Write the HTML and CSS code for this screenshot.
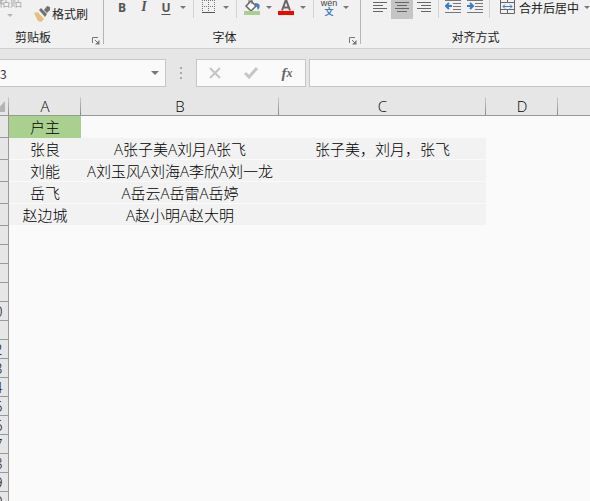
FILE: index.html
```html
<!DOCTYPE html>
<html lang="zh-CN">
<head>
  <meta charset="UTF-8">
  <title>户主</title>
  <link rel="stylesheet" href="styles.css">
</head>
<body>

  <div class="ribbon">
    <section class="group clipboard">
      <div class="tools">
        <button class="paste">粘贴<i class="caret"></i></button>
        <button class="painter">
          <svg width="16" height="16" viewBox="0 0 16 16"><path d="M0 7l4-1 6 7-3 3-3-1z" fill="#e8bf7c"/><path d="M5 4l2-2 6 6-2 3z" fill="#737373"/><path d="M10 4l3-4 3 1v3l-3 3z" fill="#737373"/><path d="M4 6l6 6" stroke="#f1f1f1"/></svg>
          格式刷
        </button>
      </div>
      <div class="group-name">剪贴板</div>
      <button class="launcher" aria-label="剪贴板"><svg width="8" height="8"><path d="M.5 6V.5H6M3 3l3 3" fill="none" stroke="#777"/><path d="M7.500 3v4.500H3z" fill="#777"/></svg></button>
    </section>

    <section class="group font">
      <div class="tools">
        <button class="tool letter"><b>B</b></button>
        <button class="tool letter"><em>I</em></button>
        <button class="tool letter"><u>U</u></button>
        <button class="drop" aria-label="U"><i class="caret"></i></button>
        <span class="sep"></span>
        <button class="tool" aria-label="田"><svg width="14" height="15"><path d="M.5 0v12M6.500 0v12M12.500 0v12M0 .5h13M0 6.500h13" stroke="#777" stroke-dasharray="1 1"/><path d="M0 12.500h13" stroke="#555"/></svg></button>
        <button class="drop" aria-label="田"><i class="caret"></i></button>
        <span class="sep"></span>
        <button class="tool" aria-label="填充"><svg width="16" height="15"><path d="M2 6l5-5 5 5-5 5z" fill="#fafafa" stroke="#666" stroke-width="1.500"/><path d="M5 3V0M8 0v4" fill="none" stroke="#666"/><path d="M11 3c5 0 6 3 3 7-1-1 0-3-3-5z" fill="#4a7fb8"/><path d="M0 11h16v4H0z" fill="#a9d08e"/></svg></button>
        <button class="drop" aria-label="填充"><i class="caret"></i></button>
        <button class="tool" aria-label="A"><svg width="16" height="15"><path d="M4 10.500L7.500 1h1L12 10.500M5 7.500h6" fill="none" stroke="#666" stroke-width="2"/><path d="M0 11h16v4H0z" fill="#f00"/></svg></button>
        <button class="drop" aria-label="A"><i class="caret"></i></button>
        <span class="sep"></span>
        <button class="tool pinyin"><span>wèn</span><span class="wen">文</span></button>
        <button class="drop" aria-label="文"><i class="caret"></i></button>
      </div>
      <div class="group-name">字体</div>
      <button class="launcher" aria-label="字体"><svg width="8" height="8"><path d="M.5 6V.5H6M3 3l3 3" fill="none" stroke="#777"/><path d="M7.500 3v4.500H3z" fill="#777"/></svg></button>
    </section>

    <section class="group align">
      <div class="tools">
        <button class="tool" aria-label="左"><svg width="14" height="15"><path d="M0 2.500h14M0 5.500h10M0 8.500h14M0 11.500h10" stroke="#666"/></svg></button>
        <button class="tool active" aria-label="中"><svg width="14" height="15"><path d="M0 2.500h14M2 5.500h10M0 8.500h14M2 11.500h10" stroke="#666"/></svg></button>
        <button class="tool" aria-label="右"><svg width="14" height="15"><path d="M0 2.500h14M4 5.500h10M0 8.500h14M4 11.500h10" stroke="#666"/></svg></button>
        <span class="sep"></span>
        <button class="tool" aria-label="减少"><svg width="16" height="15"><path d="M0 .5h16M8 3.500h8M8 6.500h8M8 9.500h8M0 12.500h16" stroke="#777"/><path d="M1 6h6M4 3L1 6l3 3" fill="none" stroke="#3f7dbd" stroke-width="2"/></svg></button>
        <button class="tool" aria-label="增加"><svg width="16" height="15"><path d="M0 .5h16M8 3.500h8M8 6.500h8M8 9.500h8M0 12.500h16" stroke="#777"/><path d="M0 6h6M3 3l3 3-3 3" fill="none" stroke="#3f7dbd" stroke-width="2"/></svg></button>
        <span class="sep"></span>
        <button class="merge">
          <svg width="15" height="14"><path d="M.5 0v13.500h14V0M7.500 0v3M7.500 10v3M0 2.500h15M0 9.500h15" fill="none" stroke="#666"/><path d="M3 6.500h9M5 4.500l-2 2 2 2M10 4.500l2 2-2 2" fill="none" stroke="#3f7dbd"/></svg>
          合并后居中
        </button>
        <button class="drop" aria-label="合并后居中"><i class="caret"></i></button>
      </div>
      <div class="group-name">对齐方式</div>
    </section>
  </div>

  <div class="formula-bar">
    <div class="name-box">
      <input type="text" value="3" aria-label="名称框">
      <button class="drop" aria-label="名称"><i class="caret"></i></button>
    </div>
    <svg class="grip" width="2" height="12"><path d="M0 0h2v2H0zM0 5h2v2H0zM0 10h2v2H0z" fill="#aaa"/></svg>
    <div class="formula-buttons">
      <button aria-label="取消"><svg width="12" height="12"><path d="M1 1l10 10M11 1L1 11" stroke="#c4c4c4" stroke-width="2"/></svg></button>
      <button aria-label="输入"><svg width="14" height="12"><path d="M1 6l4 4 8-9" fill="none" stroke="#c6c6c6" stroke-width="3"/></svg></button>
      <button class="fx">f<small>x</small></button>
    </div>
    <input class="formula" type="text" aria-label="编辑栏">
  </div>

  <div class="sheet">
    <table class="grid">
      <colgroup>
        <col class="col-num"><col class="col-a"><col class="col-b"><col class="col-c"><col class="col-d"><col>
      </colgroup>
      <thead>
        <tr>
          <th class="corner"><svg width="10" height="11"><path d="M10 0v11H0z" fill="#b4b4b4"/></svg></th>
          <th>A</th><th>B</th><th>C</th><th>D</th><th></th>
        </tr>
      </thead>
      <tbody>
        <tr class="data"><th>1</th><td class="title">户主</td><td></td><td></td><td></td><td></td></tr>
        <tr class="data band"><th>2</th><td>张良</td><td>A张子美A刘月A张飞</td><td>张子美，刘月，张飞</td><td></td><td></td></tr>
        <tr class="data band"><th>3</th><td>刘能</td><td>A刘玉风A刘海A李欣A刘一龙</td><td></td><td></td><td></td></tr>
        <tr class="data band"><th>4</th><td>岳飞</td><td>A岳云A岳雷A岳婷</td><td></td><td></td><td></td></tr>
        <tr class="data band"><th>5</th><td>赵边城</td><td>A赵小明A赵大明</td><td></td><td></td><td></td></tr>
        <tr><th>6</th><td colspan="5"></td></tr>
        <tr><th>7</th><td colspan="5"></td></tr>
        <tr><th>8</th><td colspan="5"></td></tr>
        <tr><th>9</th><td colspan="5"></td></tr>
        <tr><th>10</th><td colspan="5"></td></tr>
        <tr><th>11</th><td colspan="5"></td></tr>
        <tr><th>12</th><td colspan="5"></td></tr>
        <tr><th>13</th><td colspan="5"></td></tr>
        <tr><th>14</th><td colspan="5"></td></tr>
        <tr><th>15</th><td colspan="5"></td></tr>
        <tr><th>16</th><td colspan="5"></td></tr>
        <tr><th>17</th><td colspan="5"></td></tr>
        <tr><th>18</th><td colspan="5"></td></tr>
        <tr><th>19</th><td colspan="5"></td></tr>
        <tr><th>20</th><td colspan="5"></td></tr>
      </tbody>
    </table>
  </div>

</body>
</html>
```
FILE: styles.css
```css
* {
  box-sizing: border-box;
}
body {
  margin: 0;
  height: 100vh;
  display: flex;
  flex-direction: column;
  overflow: hidden;
  background: #fafafa;
  color: #222;
  font-family: "Noto Sans CJK SC", sans-serif;
  font-size: 12px;
}
button {
  display: flex;
  align-items: center;
  justify-content: center;
  flex: none;
  padding: 0;
  border: 0;
  background: none;
  color: inherit;
  font: inherit;
  white-space: nowrap;
}
svg {
  display: block;
  flex: none;
}
.caret {
  flex: none;
  border: 3px solid transparent;
  border-top-color: #777;
  border-bottom: 0;
}

/* ribbon */
.ribbon {
  display: flex;
  flex: none;
  height: 49px;
  background: #f1f1f1;
  border-bottom: 1px solid #cfcfcf;
  overflow: hidden;
}
.group {
  position: relative;
  display: flex;
  flex-direction: column;
  flex: none;
  background: linear-gradient(#b5b5b5, #b5b5b5) right top / 1px 44px no-repeat;
}
.clipboard {
  width: 104px;
}
.font {
  width: 257px;
}
.align {
  flex: 1 0 0;
  min-width: 0;
  background: none;
}
.tools {
  display: flex;
  align-items: flex-start;
  flex: 1;
}
.font .tools {
  padding-left: 7px;
}
.align .tools {
  padding-left: 8px;
}
.group-name {
  height: 22px;
  line-height: 22px;
  text-align: center;
}
.clipboard .group-name {
  padding-right: 38px;
}
.font .group-name {
  padding-right: 16px;
}
.launcher {
  position: absolute;
  right: 4px;
  bottom: 3px;
}
.paste {
  flex-direction: column;
  gap: 4px;
  width: 20px;
  margin-top: -6px;
  line-height: 16px;
  color: #aaa;
}
.paste .caret {
  border-top-color: #b5b5b5;
}
.painter {
  gap: 2px;
  margin: 5px 0 0 14px;
}
.tool {
  width: 22px;
  height: 19px;
  padding-bottom: 4px;
}
.letter {
  height: 14px;
  padding: 0;
  color: #555;
  font-family: "Open Sans", sans-serif;
  font-size: 12px;
}
.letter em {
  font-family: "Liberation Serif", serif;
  font-size: 14px;
  font-weight: bold;
}
.letter u {
  font-weight: bold;
  text-underline-offset: 2px;
}
.active {
  background: #c5c5c5;
}
.drop {
  width: 12px;
  height: 14px;
}
.sep {
  flex: none;
  width: 1px;
  height: 18px;
  margin: 0 4px;
  background: #d2d2d2;
}
.align .sep {
  margin: 0 3px;
}
.pinyin {
  flex-direction: column;
  justify-content: flex-start;
  height: 18px;
  padding: 0;
  color: #444;
  font-family: "Liberation Sans", "Noto Sans CJK SC", sans-serif;
  font-size: 9px;
  line-height: 6px;
}
.wen {
  color: #3f7dbd;
  font-weight: bold;
  line-height: 12px;
}
.merge {
  gap: 4px;
  height: 14px;
  margin: 0 2px 0 7px;
}

/* name box and formula bar */
.formula-bar {
  display: flex;
  align-items: center;
  flex: none;
  padding: 10px 0;
  background: #e6e6e6;
}
.name-box,
.formula-buttons,
.formula {
  height: 28px;
  border: 1px solid #c6c6c6;
  background: #fafafa;
}
.name-box {
  display: flex;
  align-items: center;
  width: 166px;
  padding-right: 4px;
  border-left: 0;
}
.name-box input {
  flex: 1;
  min-width: 0;
  padding: 0;
  border: 0;
  background: none;
  color: #333;
  font: inherit;
}
.name-box .caret {
  border-width: 4px 4px 0;
}
.grip {
  margin: 0 14px;
}
.formula-buttons {
  display: flex;
  justify-content: space-around;
  width: 110px;
}
.formula-buttons button {
  width: 36px;
}
.formula-buttons .fx {
  color: #666;
  font: italic bold 15px "Liberation Serif", serif;
}
.fx small {
  font-size: 12px;
}
.formula {
  flex: 1;
  min-width: 0;
  margin-left: 3px;
  border-right: 0;
}

/* sheet, scrolled so that the row numbers are half hidden */
.sheet {
  flex: 1;
  min-height: 0;
  overflow: hidden;
}
.grid {
  width: calc(100% + 20px);
  margin-left: -20px;
  border-spacing: 0;
  table-layout: fixed;
  color: #000;
  font-family: "Open Sans", "Noto Sans CJK SC", sans-serif;
  font-size: 15px;
  line-height: 18px;
}
.col-num {
  width: 29px;
}
.col-a,
.col-d {
  width: 72px;
}
.col-b {
  width: 198px;
}
.col-c {
  width: 207px;
}
.grid th,
.grid td {
  height: 19px;
  padding: 0;
  text-align: center;
  font-weight: 300;
  white-space: nowrap;
}
.grid th {
  border-bottom: 1px solid #999;
  background: #e6e6e6;
}
.grid thead th {
  background: linear-gradient(#ccc, #888) right / 1px 100% no-repeat #e6e6e6;
}
.grid thead th:last-child {
  background: #e6e6e6;
}
.corner svg {
  margin-left: 15px;
}
.grid tbody th {
  border-right: 1px solid #999;
}
.grid .data th,
.grid .data td {
  height: 22px;
}
.band td:nth-child(-n+4) {
  background: #f2f2f2;
  border-bottom: 1px solid #fafafa;
}
.grid .title {
  background: #a9d08e;
}
```
